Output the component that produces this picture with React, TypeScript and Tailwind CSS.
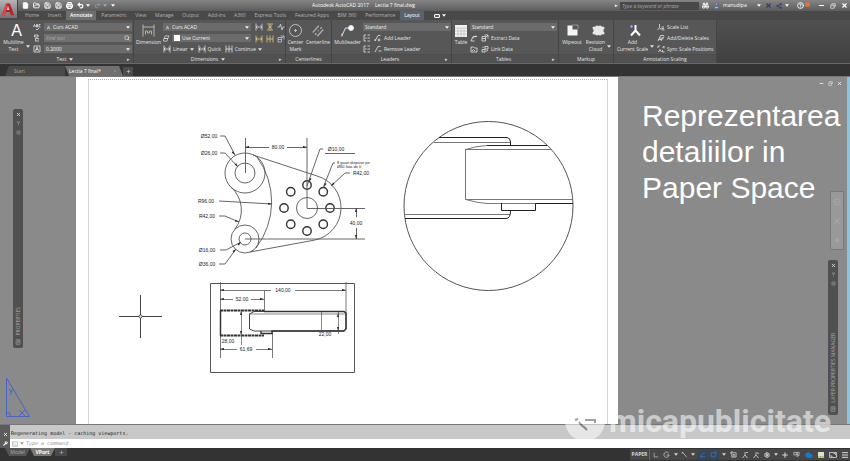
import { useState, type ReactNode } from "react"
import {
  Binoculars,
  CircleHelp,
  Cloud,
  FileText,
  FolderOpen,
  Menu,
  Minus,
  Plus,
  Printer,
  Redo2,
  Save,
  Search,
  Settings,
  Share2,
  Undo2,
  User,
  Wrench,
  X,
} from "lucide-react"

const ribbonTabs = [
  "Home",
  "Insert",
  "Annotate",
  "Parametric",
  "View",
  "Manage",
  "Output",
  "Add-ins",
  "A360",
  "Express Tools",
  "Featured Apps",
  "BIM 360",
  "Performance",
  "Layout",
]

const Caret = () => (
  <svg viewBox="0 0 6 4" className="h-[3px] w-[4px] shrink-0 fill-current">
    <path d="M0 0h6L3 4z" />
  </svg>
)

const Glyph = ({ d, className = "size-[8px]" }: { d: string; className?: string }) => (
  <svg viewBox="0 0 16 16" className={`shrink-0 fill-none stroke-current stroke-[1.6] ${className}`}>
    <path d={d} />
  </svg>
)

const glyphs = {
  find: "M3 2h7M3 6h7M10 2v4M3 2v4M5 14V9h6M5 14h7M11 9v2",
  height: "M2 2h12v12H2zM5 12l3-8 3 8M6 9h4",
  abc: "M1 8l2-5 2 5M7 3v5h2V3zM15 3h-3v5h3M6 12l2 2 4-4",
  linear: "M2 1v14M14 1v14M2 8h12M5 5L2 8l3 3M11 5l3 3-3 3",
  continued: "M2 1v14M8 1v14M14 1v14M2 8h12",
  layers: "M5 2h9l-3 6H3zM2 8h9l-2 6H1z",
  breakDim: "M2 2h12M2 14h12M8 2v12M4 5l8 6M12 5l-8 6",
  jog: "M1 8h4l2-6 3 12 2-6h3",
  add: "M2 14L8 3M8 3h5M10 9v6M7 12h6M2 14v-4",
  remove: "M2 14L8 3M8 3h5M9 12h6",
  align: "M6 2H2v12h4M9 2h5M9 8h5M9 14h5M4 8h3",
  extract: "M2 5h7v9H2zM2 9h7M7 2h7v7M10 6l4-4",
  link: "M2 9h6v5H2zM8 3h6v5H8zM3 6l3-3M10 13l4-3",
  upload: "M2 14l4-9h8M6 9l4-5 4 1M2 14h7",
  image: "M2 4h5l2 2h5v8H2zM4 12l3-3 3 3",
  scaleList: "M5 2v7M5 9l-4 5M5 9l4 5M9 8h5M9 11h5M10 14h5",
  scaleEdit: "M2 14l3-6h8M5 8l2-5h7M8 14l6-9M3 11h7",
  sync: "M2 6V2h4M14 2l-3 4M14 2v5M3 14l3-5 3 5M11 10v4h4",
}

const Panel = ({
  title,
  className,
  children,
  caret,
  corner,
}: {
  title: string
  className: string
  children: ReactNode
  caret?: boolean
  corner?: boolean
}) => (
  <section
    aria-label={title}
    className={`flex shrink-0 flex-col border-r border-[#444] bg-[#575757] pt-[2px] ${className}`}
  >
    <div className="flex flex-1">{children}</div>
    <div className="flex h-[9px] items-center border-t border-[#4d4d4d] bg-[#515151] px-[3px]">
      <h2 className="flex flex-1 items-center justify-center gap-[3px] text-[#e2e2e2]">
        {title}
        {caret ? <Caret /> : null}
      </h2>
      {corner ? <span className="text-[#ddd]">▸</span> : null}
    </div>
  </section>
)

const BigButton = ({
  icon,
  lines,
  className,
  caret,
}: {
  icon: ReactNode
  lines: string[]
  className: string
  caret?: boolean
}) => (
  <button className={`flex shrink-0 flex-col items-center text-center ${className}`}>
    <span className="flex h-[17px] items-center">{icon}</span>
    <span className="flex items-center gap-[2px] whitespace-nowrap">
      <span className="leading-[7px]">
        {lines.map((line) => (
          <span key={line} className="block">
            {line}
          </span>
        ))}
      </span>
      {caret ? <Caret /> : null}
    </span>
  </button>
)

const Picker = ({ label, value, icon }: { label: string; value: string; icon?: ReactNode }) => (
  <label className="flex h-[8px] min-w-0 flex-1 items-center gap-[2px] bg-[#6b6b6b] px-[2px] text-[#f2f2f2]">
    {icon}
    <select aria-label={label} className="min-w-0 flex-1 appearance-none bg-transparent outline-none">
      <option>{value}</option>
    </select>
    <Caret />
  </label>
)

const Row = ({ children, className = "" }: { children: ReactNode; className?: string }) => (
  <div className={`flex h-[10px] items-center gap-[2px] ${className}`}>{children}</div>
)

const Tool = ({ d, d2, label, caret }: { d: string; d2?: string; label: string; caret?: boolean }) => (
  <button className="flex items-center gap-[2px] whitespace-nowrap">
    <Glyph d={d} />
    {d2 ? (
      <span className="ml-[1px] flex">
        <Glyph d={d2} />
      </span>
    ) : null}
    {label}
    {caret ? <Caret /> : null}
  </button>
)

const TitleBar = () => (
  <header className="flex h-[11px] shrink-0 items-center bg-linear-to-b from-[#858585] to-[#5c5c5c] pl-[22px] text-white">
    <nav aria-label="Quick access" className="flex w-[90px] items-center gap-[4px]">
      <button aria-label="New"><FileText className="size-[7px] fill-white" /></button>
      <button aria-label="Open"><FolderOpen className="size-[7px]" strokeWidth={3} /></button>
      <button aria-label="Save"><Save className="size-[7px]" strokeWidth={3} /></button>
      <button aria-label="Save as"><Save className="size-[7px]" strokeWidth={3} /></button>
      <button aria-label="Plot"><Printer className="size-[7px]" strokeWidth={4} /></button>
      <button aria-label="Undo" className="flex items-center gap-[2px]"><Undo2 className="size-[7px]" strokeWidth={4} /><Caret /></button>
      <button aria-label="Redo" className="flex items-center gap-[2px] text-[#aaa]"><Redo2 className="size-[7px]" /><Caret /></button>
      <button aria-label="Customize"><Caret /></button>
    </nav>
    <h1 className="flex flex-1 justify-center gap-[6px] whitespace-pre">
      <span>Autodesk AutoCAD 2017</span>
      <span>Lectia 7 final.dwg</span>
    </h1>
    <div className="flex items-center">
      <span className="mr-[2px] text-[5px]">▸</span>
      <input
        aria-label="Search"
        placeholder="Type a keyword or phrase"
        className="h-[8px] w-[79px] bg-[#484848] px-[2px] italic outline-none placeholder:text-[#a8a8a8]"
      />
      <button aria-label="Find" className="ml-[3px]"><Binoculars className="size-[7px]" strokeWidth={3} /></button>
      <button className="ml-[4px] flex w-[48px] items-center gap-[3px]">
        <User className="size-[7px] fill-[#9db8ef] text-[#3f5f9f]" />
        <span className="flex-1 text-left">manudipa</span>
        <Caret />
      </button>
      <button aria-label="Exchange" className="ml-[4px]"><X className="size-[7px] text-[#2c3d70]" strokeWidth={4} /></button>
      <button aria-label="Connect" className="ml-[4px] flex items-center gap-[3px]"><Share2 className="size-[6px] text-[#2c3d70]" strokeWidth={3} /><Caret /></button>
      <button aria-label="Help" className="ml-[8px] flex items-center gap-[1px]">
        <CircleHelp className="size-[7px]" strokeWidth={3} />
        <span className="mb-[2px] size-[5px] rounded-full bg-[#d9743c]" />
      </button>
      <div className="ml-[8px] flex gap-[5px] pr-[2px]">
        <button aria-label="Minimize"><Minus className="size-[7px]" strokeWidth={4} /></button>
        <button aria-label="Restore"><Glyph d="M5 5V2h9v7h-3M2 6h9v8H2z" className="size-[6px]" /></button>
        <button aria-label="Close"><X className="size-[7px]" strokeWidth={4} /></button>
      </div>
    </div>
  </header>
)

const RibbonTabs = ({ active, onSelect }: { active: string; onSelect: (tab: string) => void }) => (
  <nav aria-label="Ribbon tabs" className="flex h-[9px] shrink-0 items-center bg-[#494949] pl-[21px] text-[#b5b5b5]">
    <div className="flex h-full w-[403px] justify-between">
      {ribbonTabs.map((tab) => (
        <button
          key={tab}
          onClick={() => onSelect(tab)}
          className={`h-full px-[4px] whitespace-nowrap ${
            tab === active ? "bg-[#6e6e6e] font-semibold text-white" : tab === "Layout" ? "bg-[#5a626b] text-white" : ""
          }`}
        >
          {tab}
        </button>
      ))}
    </div>
    <button aria-label="Ribbon display" className="ml-[10px] flex items-center gap-[2px] text-white">
      <span className="h-[4px] w-[6px] rounded-[1px] border border-white bg-[#666]" />
      <Caret />
    </button>
  </nav>
)

const Ribbon = () => (
  <div className="flex h-[44px] shrink-0 border-b border-[#686868] bg-linear-to-b from-[#505050] to-[#404040] text-[#e6e6e6]">
    <Panel title="Text" className="w-[134px]" caret corner>
      <BigButton
        className="w-[33px]"
        caret
        lines={["Multiline", "Text"]}
        icon={<span className="font-['Liberation_Sans'] text-[16px] leading-[16px] text-white">A</span>}
      />
      <div className="flex flex-1 flex-col gap-[1px] pr-[1px]">
        <Row className="gap-[3px]">
          <Glyph d={glyphs.abc} />
          <Picker label="Text style" value="Curs ACAD" icon={<Glyph d="M4 14L8 3l4 11M5 10h6" className="size-[5px]" />} />
        </Row>
        <Row className="gap-[3px]">
          <Glyph d={glyphs.find} />
          <span className="flex h-[8px] min-w-0 flex-1 items-center bg-[#707070] px-[2px]">
            <input aria-label="Find text" placeholder="Find text" className="min-w-0 flex-1 bg-transparent italic outline-none placeholder:text-[#aaa]" />
            <Search className="size-[6px] text-[#e7dcae]" strokeWidth={3} />
          </span>
        </Row>
        <Row className="gap-[3px]">
          <Glyph d={glyphs.height} />
          <Picker label="Text height" value="0.2000" />
        </Row>
      </div>
    </Panel>

    <Panel title="Dimensions" className="w-[152px]" caret corner>
      <BigButton
        className="w-[29px]"
        lines={["Dimension"]}
        icon={
          <svg viewBox="0 0 26 26" className="size-[13px] fill-none stroke-[#b5b5b5] stroke-2">
            <path d="M2 1v24M24 1v24M2 6h22" />
            <path d="M7 21v-7h4v4h4v-4h4v7" className="stroke-[#d5b15c]" />
          </svg>
        }
      />
      <div className="flex flex-1 flex-col gap-[1px]">
        <div className="flex">
          <div className="flex w-[88px] flex-col gap-[1px]">
            <Row>
              <Picker label="Dimension style" value="Curs ACAD" icon={<Glyph d="M4 14L8 3l4 11M5 10h6" className="size-[5px]" />} />
            </Row>
            <Row>
              <Glyph d={glyphs.layers} className="size-[7px]" />
              <Picker label="Dimension layer" value="Use Current" icon={<span className="size-[6px] bg-white" />} />
            </Row>
          </div>
          <div className="ml-[4px] grid grid-cols-3 gap-x-[3px] gap-y-[3px] pt-[1px] text-[#d8d8d8]">
            <Glyph d={glyphs.linear} />
            <span className="flex text-[#e2c77d]"><Glyph d={glyphs.breakDim} /></span>
            <Glyph d={glyphs.jog} />
            <span className="flex text-[#e2c77d]"><Glyph d={glyphs.linear} /></span>
            <span className="flex text-[#e2c77d]"><Glyph d={glyphs.continued} /></span>
            <span className="flex text-[#b9c3ee]"><Glyph d={glyphs.extract} /></span>
          </div>
        </div>
        <Row className="gap-[4px]">
          <Tool d={glyphs.linear} label="Linear" caret />
          <Tool d={glyphs.linear} label="Quick" />
          <Tool d={glyphs.continued} label="Continue" caret />
        </Row>
      </div>
    </Panel>

    <Panel title="Centerlines" className="w-[46px]">
      <BigButton
        className="w-[19px]"
        lines={["Center", "Mark"]}
        icon={
          <svg viewBox="0 0 26 26" className="size-[13px] fill-none stroke-[#c0c0c0] stroke-2">
            <circle cx="13" cy="13" r="12" />
            <path d="M13 10v6M10 13h6" />
          </svg>
        }
      />
      <BigButton
        className="w-[26px]"
        lines={["Centerline"]}
        icon={
          <span className="flex text-[#b0b0b0]">
            <Glyph d="M1 10L9 1M7 15l8-9M4 13l2-2M8 8l1-1M11 5l2-2" className="size-[12px]" />
          </span>
        }
      />
    </Panel>

    <Panel title="Leaders" className="w-[120px]" corner>
      <BigButton
        className="w-[31px]"
        lines={["Multileader"]}
        icon={
          <svg viewBox="0 0 26 26" className="size-[13px] fill-none stroke-[#e5e5e5] stroke-2">
            <path d="M2 25v-6M2 23L9 8h6" />
            <circle cx="20" cy="8" r="5" className="fill-white" />
          </svg>
        }
      />
      <div className="flex flex-1 flex-col gap-[1px]">
        <Row><Picker label="Leader style" value="Standard" /></Row>
        <Row><Tool d={glyphs.align} d2={glyphs.add} label="Add Leader" /></Row>
        <Row><Tool d={glyphs.align} d2={glyphs.remove} label="Remove Leader" /></Row>
      </div>
    </Panel>

    <Panel title="Tables" className="w-[107px]" corner>
      <BigButton
        className="w-[18px]"
        lines={["Table"]}
        icon={
          <svg viewBox="0 0 24 24" className="size-[12px]">
            <path d="M0 0h24v24H0z" className="fill-[#f2f2f2]" />
            <path d="M0 6h24M0 12h24M0 18h24M6 6v18M12 6v18M18 6v18" className="stroke-[#aaa]" />
          </svg>
        }
      />
      <div className="flex flex-1 flex-col gap-[1px] pr-[1px]">
        <Row><Picker label="Table style" value="Standard" /></Row>
        <Row><Tool d={glyphs.upload} d2={glyphs.extract} label="Extract Data" /></Row>
        <Row><Tool d={glyphs.image} d2={glyphs.link} label="Link Data" /></Row>
      </div>
    </Panel>

    <Panel title="Markup" className="w-[55px]">
      <BigButton
        className="w-[26px]"
        lines={["Wipeout"]}
        icon={
          <svg viewBox="0 0 26 26" className="size-[13px]">
            <path d="M3 3h10v8h10v12H3z" className="fill-[#f5f5f5]" />
            <path d="M13 2h11v8" strokeDasharray="2 2" className="fill-none stroke-[#ccc] stroke-2" />
          </svg>
        }
      />
      <BigButton
        className="w-[27px]"
        caret
        lines={["Revision", "Cloud"]}
        icon={
          <svg viewBox="0 0 26 22" className="h-[11px] w-[13px] fill-[#e8e8e8]">
            <rect x="3" y="4" width="20" height="14" />
            <circle cx="4" cy="6" r="3" /><circle cx="10" cy="5" r="4" /><circle cx="16" cy="5" r="4" /><circle cx="22" cy="6" r="3" />
            <circle cx="4" cy="16" r="3" /><circle cx="10" cy="17" r="4" /><circle cx="16" cy="17" r="4" /><circle cx="22" cy="16" r="3" />
          </svg>
        }
      />
    </Panel>

    <Panel title="Annotation Scaling" className="w-[103px]">
      <BigButton
        className="w-[43px]"
        caret
        lines={["Add", "Current Scale"]}
        icon={
          <svg viewBox="0 0 26 26" className="size-[13px]">
            <path d="M13 2v12M13 13L4 23M13 13l9 10" className="fill-none stroke-white stroke-4" />
            <path d="M2 5h6M5 2v6" className="stroke-[#8ea4f0] stroke-2" />
          </svg>
        }
      />
      <div className="flex flex-1 flex-col gap-[1px]">
        <Row><Tool d={glyphs.scaleList} label="Scale List" /></Row>
        <Row><Tool d={glyphs.scaleEdit} label="Add/Delete Scales" /></Row>
        <Row><Tool d={glyphs.sync} label="Sync Scale Positions" /></Row>
      </div>
    </Panel>
  </div>
)

const FileTabs = () => (
  <nav aria-label="Drawings" className="flex h-[12px] shrink-0 items-end bg-[#333] pl-[5px] text-[#a5a5a5]">
    <button className="h-[10px] w-[60px] bg-[#4a4a4a] pl-[9px] text-left [clip-path:polygon(4px_0,100%_0,100%_100%,0_100%)]">Start</button>
    <button className="flex h-[10px] w-[58px] items-center bg-[#707070] pl-[4px] text-left text-white [clip-path:polygon(0_0,54px_0,100%_100%,4px_100%)]">
      <span className="flex-1">Lectia 7 final*</span>
      <X className="mr-[6px] size-[4px] text-[#aaa]" />
    </button>
    <button aria-label="New drawing" className="flex h-[9px] w-[10px] items-center justify-center bg-[#4d4d4d] text-[#ccc]">
      <Plus className="size-[5px]" strokeWidth={3} />
    </button>
  </nav>
)

const Arrow = ({ x, y, angle }: { x: number; y: number; angle: number }) => (
  <path d="M0 0l-4 -1v2z" fill="#222" stroke="none" transform={`translate(${x} ${y}) rotate(${angle})`} />
)

const arrows = [
  [245, 147, 180], [307, 147, 0], [356, 208, 270], [356, 239, 90],
  [235, 155, 50], [238, 167, 50], [272, 204, 2], [239, 222, 20],
  [241, 242, 315], [236, 249, 315], [309, 182, 115], [324, 187, 115], [331, 186, 135],
  [220, 290, 180], [346, 290, 0], [220, 299, 180], [264, 299, 0],
  [220, 349, 180], [272, 349, 0], [241, 311, 270], [241, 335, 90], [338, 313, 270], [338, 331, 90],
]

const dimensions: [number, number, string][] = [
  [209, 138, "Ø52,00"], [209, 155, "Ø26,00"], [206, 203, "R96,00"], [207, 218, "R42,00"],
  [207, 252, "Ø16,00"], [207, 266, "Ø36,00"], [278, 149, "80,00"], [336, 151, "Ø10,00"],
  [361, 175, "R42,00"], [356, 225, "40,00"], [283, 292, "140,00"], [242, 301, "52,00"],
  [228, 343, "28,00"], [325, 336, "22,00"], [246, 351, "61,69"],
]

const holes = [0, 45, 90, 135, 180, 225, 270, 315]

const Drawing = () => (
  <svg
    viewBox="76 77 542 347"
    preserveAspectRatio="xMinYMin slice"
    className="h-full w-full bg-white font-['Liberation_Sans',sans-serif]"
    fill="none"
    stroke="#555"
    strokeWidth="1"
  >
    <path d="M88.5 79.5V424M607.5 79.5V424M88 79.5H608" stroke="#aaa" strokeDasharray="1 1" />

    {/* front view */}
    <g strokeWidth="0.9">
      <circle cx="245" cy="173" r="20" />
      <circle cx="245" cy="173" r="10" />
      <circle cx="245" cy="239" r="14" />
      <circle cx="245" cy="239" r="6" />
      <circle cx="307" cy="208" r="10.5" />
      <path d="M253 155L317 176A33 33 0 0 1 315 240L250 252" />
      <path d="M257 157A76 76 0 0 1 256 248" />
      <path d="M231 187A31 31 0 0 1 235 229" />
      {holes.map((deg) => (
        <circle
          key={deg}
          cx={307 + 23 * Math.cos((deg * Math.PI) / 180)}
          cy={208 + 23 * Math.sin((deg * Math.PI) / 180)}
          r="4.2"
          stroke="#333"
          strokeWidth="1.4"
        />
      ))}
      <path d="M245.500 138V173M307 138V208M307 208.500H365M245 239H365M245 147.500H269M287 147.500H307M356.500 208V217M356.500 228V239" />
      <path d="M220 136H225L235 155M220 153H225L238 167M219 201L272 204M219 216H225L239 222M220 250H226L241 242M219 264H225L236 249" />
      <path d="M323 149H320L307 186M325 153.500H355M335 163H333L323 188M350 173L345 173L331 186" />
    </g>

    {/* side view */}
    <path d="M210.500 283.500H354.500V372.500H210.500Z" />
    <path d="M220.500 282V358M264.500 291V311M272.500 332V358M220 290.500H271M295 290.500H346M346 282V313M220 299.500H233M251 299.500H264M220 349.500H237M256 349.500H272" strokeWidth="0.8" />
    <path d="M220.500 310V336" stroke="#333" strokeWidth="1.5" />
    <path d="M220 310.500H264M220 335.500H264" stroke="#333" strokeWidth="2" strokeDasharray="3 0.5" />
    <path d="M249.500 329V314L254 311.500H344L346 313V329L344 331H254Z" stroke="#444" />
    <path d="M264 311.500H344L346 313V329L344 331H272V333.500H261V331" stroke="#333" strokeWidth="1.4" />
    <path d="M321.500 312V331M241.500 311V345M338.500 312V334M249 314H346" strokeWidth="0.7" />

    {/* enlarged detail */}
    <circle cx="488.500" cy="206" r="84.500" />
    <path d="M434 142.500H510M465 149.500H552M465.500 149.500V199.500H572.500M404.500 214.500H510M465.500 149.500Q476 146 487 145.500M465.500 199.500Q478 203 487 203.500H536" stroke="#777" />
    <path d="M439 137.500H507Q510.500 138 510.500 142V145.500M487 145.500H547M501.500 203V210.500H535.500V203.500H573M510.500 211Q510.500 218.500 506 218.500H405" stroke="#222" />

    {arrows.map(([x, y, angle]) => (
      <Arrow key={`${x}-${y}`} x={x} y={y} angle={angle} />
    ))}
    <g fill="#222" stroke="none" fontSize="5" textAnchor="middle">
      {dimensions.map(([x, y, label]) => (
        <text key={`${x}-${y}`} x={x} y={y}>
          {label}
        </text>
      ))}
      <g fontSize="4" textAnchor="start">
        <text x="337" y="164">8 gauri dispuse pe</text>
        <text x="337" y="168">Ø60 fata de 0</text>
      </g>
    </g>

    <path d="M119 316.500H139M142 316.500H162M140.500 295V315M140.500 318V338" stroke="#444" />
    <circle cx="140.500" cy="316.500" r="1.500" stroke="#444" />
  </svg>
)

const Palette = ({ title, className }: { title: string; className: string }) => (
  <aside
    aria-label={title}
    className={`absolute flex w-[10px] flex-col items-center rounded-[2px] bg-[#505050] py-[3px] text-[#aaa] ${className}`}
  >
    <button aria-label={`Close ${title}`}><X className="size-[5px] text-[#ddd]" strokeWidth={4} /></button>
    <button aria-label={`Auto-hide ${title}`} className="mt-[4px]"><Glyph d="M3 3h10L8 8zM8 8v6" className="size-[5px]" /></button>
    <button aria-label={`${title} menu`} className="mt-[4px]"><Glyph d="M3 3h10v10H3zM5 8h6" className="size-[5px]" /></button>
    <span className="mt-auto mb-[3px] rotate-180 whitespace-nowrap [writing-mode:vertical-rl]">{title}</span>
    <Glyph d="M3 2h10v12H3zM6 5h5v3H6v3" className="size-[6px]" />
  </aside>
)

const Workspace = () => (
  <main className="relative grid min-h-0 flex-1 grid-cols-[76fr_542fr_232fr] border-t border-[#777] bg-[#8a8a8a]">
    <div className="flex flex-col justify-end p-[5px]">
      <svg viewBox="0 0 26 42" className="h-[42px] w-[26px] fill-none stroke-[#4864c4]">
        <path d="M1.500 1V39.500H24.500ZM1.500 36H5V39.500" />
        <path d="M4 12l2 3 2-3M6 15v3M14 33l6 6M20 33l-6 6" />
      </svg>
    </div>
    <Drawing />
    <div className="flex flex-col border-r-[3px] border-[#8ac4de] pl-[24px]">
      <div className="flex justify-end gap-[4px] pt-[4px] pr-[5px] text-[#eee]">
        <button aria-label="Minimize drawing"><Minus className="size-[5px]" strokeWidth={4} /></button>
        <button aria-label="Restore drawing"><Glyph d="M5 5V2h9v7h-3M2 6h9v8H2z" className="size-[5px]" /></button>
        <button aria-label="Close drawing"><X className="size-[5px]" strokeWidth={4} /></button>
      </div>
      <p className="mt-[12px] font-['Liberation_Sans',sans-serif] text-[30px] leading-[36px] whitespace-nowrap text-white">
        Reprezentarea
        <br />
        detaliilor in
        <br />
        Paper Space
      </p>
    </div>
    <Palette title="PROPERTIES" className="top-[32px] left-[13px] h-[239px]" />
    <Palette title="LAYER PROPERTIES MANAGER" className="top-[183px] right-[12px] h-[155px]" />
    <div className="absolute top-[114px] right-[6px] flex h-[59px] w-[14px] flex-col items-center justify-around rounded-[1px] border border-[#777] bg-[#999] text-[#aeaeae]">
      <Glyph d="M8 2a6 6 0 1 0 .1 0M5 8h6" />
      <Glyph d="M3 13L13 3M3 3l10 10" />
      <Glyph d="M8 2v12M2 8h12" />
    </div>
  </main>
)

const CommandLine = () => (
  <section aria-label="Command line" className="flex h-[24px] shrink-0 border-t border-[#777] font-['DejaVu_Sans_Mono',monospace]">
    <div className="flex w-[10px] flex-col items-center justify-between bg-[#5c5c5c] pt-[7px] pb-[2px] text-white">
      <button aria-label="Close command line"><X className="size-[5px]" strokeWidth={4} /></button>
      <button aria-label="Customize command line"><Wrench className="size-[5px] fill-white" /></button>
    </div>
    <div className="flex flex-1 flex-col">
      <p className="flex h-[14px] items-end bg-[#c8c8c8] px-[1px] pb-[2px] text-[#222]">
        Regenerating model - caching viewports.
      </p>
      <label className="flex flex-1 items-center bg-white px-[2px] text-[#999]">
        <Glyph d="M1 2h14v12H1zM4 5l3 3-3 3M8 11h4" className="size-[6px]" />
        <span className="mx-[2px]"><Caret /></span>
        <input aria-label="Command" placeholder="Type a command" className="flex-1 italic outline-none placeholder:text-[#999]" />
      </label>
    </div>
  </section>
)

const StatusButton = ({ label, width = "w-[11px]", tone = "", children }: { label: string; width?: string; tone?: string; children: ReactNode }) => (
  <button aria-label={label} className={`flex h-[11px] items-center justify-center ${width} ${tone}`}>
    {children}
  </button>
)

const StatusBar = () => (
  <footer className="flex h-[13px] shrink-0 items-start bg-[#333] pl-[5px] text-[#d8d8d8]">
    <button className="h-[8px] w-[25px] bg-[#555] leading-[8px] text-[#aaa] [clip-path:polygon(0_0,100%_0,21px_100%,4px_100%)]">Model</button>
    <button className="h-[8px] w-[25px] bg-[#7a7a7a] leading-[8px] font-bold text-white [clip-path:polygon(0_0,100%_0,21px_100%,4px_100%)]">VPort</button>
    <button aria-label="New layout" className="flex h-[8px] w-[12px] items-center justify-center bg-[#4a4a4a]"><Plus className="size-[5px]" /></button>
    <div className="mt-[1px] ml-auto flex items-center bg-[#474747]">
      <button className="h-[11px] w-[20px] border-r border-[#666] font-bold">PAPER</button>
      <StatusButton label="Ortho"><Glyph d="M3 2v11h11" className="size-[6px]" /></StatusButton>
      <StatusButton label="Polar"><Glyph d="M13 5a6 6 0 1 0 1 4H8" className="size-[7px]" /></StatusButton>
      <StatusButton label="Polar settings" width="w-[7px]"><Caret /></StatusButton>
      <StatusButton label="Isodraft" width="w-[10px]"><Glyph d="M3 2l10 12M3 6v-4" className="size-[7px]" /></StatusButton>
      <StatusButton label="Isodraft settings" width="w-[8px]"><Caret /></StatusButton>
      <StatusButton label="Tracking" tone="text-[#3f78c4] bg-[#3a4656]"><Glyph d="M2 13L13 3M2 13h12" className="size-[7px]" /></StatusButton>
      <StatusButton label="Object snap" tone="text-[#3f78c4] bg-[#3a4656]"><Glyph d="M3 4h9v9H3zM10 2h4v4" className="size-[7px]" /></StatusButton>
      <StatusButton label="Snap settings" width="w-[9px]"><Caret /></StatusButton>
      <StatusButton label="Viewport scale"><Glyph d="M4 4h10v10H4zM2 2v5M2 2h5M7 8h4v4H7z" className="size-[7px]" /></StatusButton>
      <StatusButton label="Annotation visibility"><Glyph d="M8 2v6L3 14M8 8l5 6M10 3h4" className="size-[8px]" /></StatusButton>
      <StatusButton label="Auto scale"><Glyph d="M8 2v6L3 14M8 8l5 6M10 3l4 3" className="size-[8px]" /></StatusButton>
      <StatusButton label="Workspace"><Settings className="size-[6px]" strokeWidth={4} /></StatusButton>
      <StatusButton label="Workspace menu" width="w-[7px]"><Caret /></StatusButton>
      <StatusButton label="Annotation monitor"><Plus className="size-[8px]" strokeWidth={3} /></StatusButton>
      <StatusButton label="Quick view" width="w-[12px]"><Glyph d="M2 3h6v6H2zM10 3h4v7h-4zM8 12h4" className="size-[7px]" /></StatusButton>
      <StatusButton label="Hardware" width="w-[13px]" tone="text-[#1979d0]"><Cloud className="size-[8px] fill-current" strokeWidth={3} /></StatusButton>
      <StatusButton label="Isolate">
        <span className="size-[6px] border-b-2 border-[#b9c45e] bg-[#ddd]" />
      </StatusButton>
      <StatusButton label="Clean screen" width="w-[13px]"><Glyph d="M1 3h14v10H1zM9 5h4v3M7 11H4V8" className="size-[8px]" /></StatusButton>
      <StatusButton label="Customization"><Menu className="size-[8px]" strokeWidth={3} /></StatusButton>
    </div>
  </footer>
)

const Watermark = () => (
  <div className="pointer-events-none absolute right-[19px] bottom-[20px] flex items-center gap-[4px] opacity-55">
    <svg viewBox="0 0 40 40" className="size-[40px]">
      <circle cx="20" cy="20" r="20" className="fill-white" />
      <path d="M10 19l3-1M14 21l4 5M18 25l4 4M20 19h10v3" className="fill-none stroke-[#555] stroke-2" />
    </svg>
    <span className="font-['Roboto',sans-serif] text-[32px] leading-[40px] font-bold text-white">micapublicitate</span>
  </div>
)

export default function App() {
  const [activeTab, setActiveTab] = useState("Annotate")

  return (
    <div className="relative flex h-screen flex-col overflow-hidden bg-[#333] font-['Open_Sans',sans-serif] text-[5px] leading-[7px]">
      <TitleBar />
      <RibbonTabs active={activeTab} onSelect={setActiveTab} />
      <Ribbon />
      <FileTabs />
      <Workspace />
      <CommandLine />
      <StatusBar />
      <Watermark />
      <button
        aria-label="Application menu"
        className="absolute top-0 left-0 flex h-[18px] w-[18px] items-center justify-center border-r border-[#444] bg-linear-to-b from-[#b5b5b5] to-[#737373]"
      >
        <svg viewBox="0 0 32 32" className="size-[15px]">
          <path d="M2 28L11 3h8l9 25h-7l-2-6h-9l-2 6z" className="fill-[#b8232b]" />
          <path d="M12 17l3-9 3 9z" className="fill-[#e9c9c9]" />
          <path d="M2 28l9-25 3 5-6 20z" className="fill-[#e0434a]" />
        </svg>
      </button>
    </div>
  )
}
